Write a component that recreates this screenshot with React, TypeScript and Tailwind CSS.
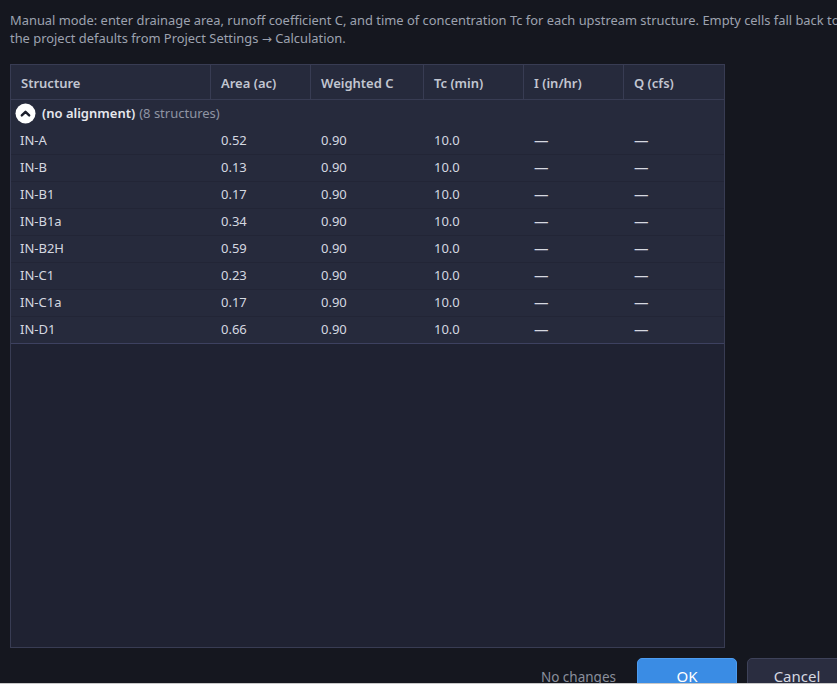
const rows = [
  { name: 'IN-A', area: '0.52' },
  { name: 'IN-B', area: '0.13' },
  { name: 'IN-B1', area: '0.17' },
  { name: 'IN-B1a', area: '0.34' },
  { name: 'IN-B2H', area: '0.59' },
  { name: 'IN-C1', area: '0.23' },
  { name: 'IN-C1a', area: '0.17' },
  { name: 'IN-D1', area: '0.66' },
];

const headers = ['Structure', 'Area (ac)', 'Weighted C', 'Tc (min)', 'I (in/hr)', 'Q (cfs)'];

const gridCols = 'grid grid-cols-[200px_100px_113px_100px_100px_100px]';

export default function App() {
  return (
    <div
      className="flex h-[684px] w-[837px] flex-col overflow-hidden bg-[#15171f]"
      style={{ fontFamily: '"Noto Sans", "Open Sans", sans-serif' }}
    >
      <div className="h-[683px] w-[857px] shrink-0 px-[10px] pt-[11px]">
        <p className="h-[36px] text-[12.9px] leading-[18px] text-[#9da2af]">
          <span className="block whitespace-nowrap">
            Manual mode: enter drainage area, runoff coefficient C, and time of concentration Tc for each upstream structure. Empty cells fall back to
          </span>
          <span className="block h-[18px] whitespace-nowrap">
            the project defaults from Project Settings{' '}
            <span className="text-[12px] leading-[0]" style={{ fontFamily: '"DejaVu Sans", sans-serif' }}>→</span>{' '}
            Calculation.
          </span>
        </p>

        <div className="mt-[17px] h-[584px] w-[715px] border border-[#383c53] bg-[#1f2232]">
          <div className={`${gridCols} h-[35px] border-b border-[#383c53] bg-[#262a3c]`}>
            {headers.map((h: string) => (
              <div
                key={h}
                className="flex items-center border-r border-[#383c53] px-[10px] pt-[3px] text-[13px] font-semibold text-[#c2c6d1] last:border-r-0"
              >
                {h}
              </div>
            ))}
          </div>

          <div className="flex h-[27px] items-center gap-[6px] bg-[#262a3c] pl-[4px] text-[13px]">
            <ChevronCircle />
            <span className="font-semibold text-[#e6e8ee]">(no alignment)</span>
            <span className="-ml-[2px] text-[#8f94a3]">(8 structures)</span>
          </div>

          <div className="border-b border-[#3d4160]">
            {rows.map((row) => (
              <div
                key={row.name}
                className={`${gridCols} h-[27px] border-t border-[#21243400] bg-[#262a3c] text-[13px] text-[#d5d8e0] [&:not(:first-child)]:border-[#222536]`}
              >
                <div className="flex items-center px-[9px]">{row.name}</div>
                <div className="flex items-center px-[10px]">{row.area}</div>
                <div className="flex items-center px-[10px]">0.90</div>
                <div className="flex items-center px-[10px]">10.0</div>
                <div className="flex items-center px-[10px] text-[14.5px]">—</div>
                <div className="flex items-center px-[10px] text-[14.5px]">—</div>
              </div>
            ))}
          </div>
        </div>

        <div className="mt-[10px] flex items-start justify-end gap-[10px]">
          <span className="mr-[11px] pt-[9px] text-[13.5px] text-[#8a8f9c]">No changes</span>
          <button
            type="button"
            className="flex h-[32px] w-[100px] items-center justify-center rounded-[5px] border border-[#4d9cf0] bg-[#3a8ce4] pt-[5px] text-[15px] text-white"
          >
            OK
          </button>
          <button
            type="button"
            className="flex h-[32px] w-[100px] items-center justify-center rounded-[5px] border border-[#3e4259] bg-[#2a2d40] pt-[5px] text-[15px] text-[#d5d8e0]"
          >
            Cancel
          </button>
        </div>
      </div>
      <div className="h-px w-full shrink-0 bg-[#c8c8c8]" />
    </div>
  );
}

function ChevronCircle() {
  return (
    <svg width="21" height="21" viewBox="0 0 21 21">
      <circle cx="10.5" cy="10.5" r="10" fill="#ffffff" />
      <path d="M6.8 12.4 L10.5 8.8 L14.2 12.4" fill="none" stroke="#1c1f2c" strokeWidth="2.4" strokeLinecap="round" strokeLinejoin="round" />
    </svg>
  );
}
